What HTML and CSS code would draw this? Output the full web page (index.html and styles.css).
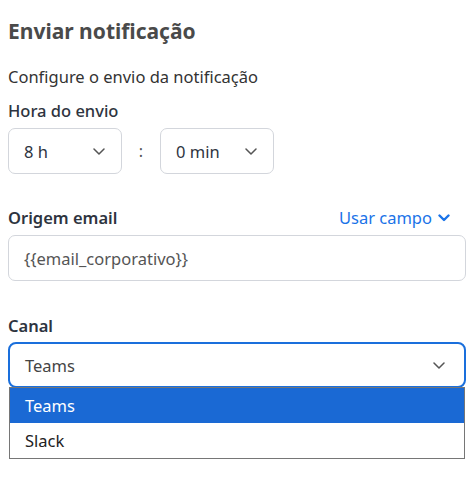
FILE: index.html
```html
<!DOCTYPE html>
<html lang="pt">
<head>
<meta charset="utf-8">
<link rel="stylesheet" href="styles.css">
</head>
<body>
<div class="panel">
  <h1 class="title">Enviar notificação</h1>
  <p class="subtitle">Configure o envio da notificação</p>
  <div class="label">Hora do envio</div>
  <div class="time-row">
    <div class="select small">
      <span class="value">8 h</span>
      <svg class="chev" width="12" height="7" viewBox="0 0 12 7"><path d="M1 1l5 5 5-5" fill="none" stroke="#555" stroke-width="1.5" stroke-linecap="round" stroke-linejoin="round"/></svg>
    </div>
    <span class="colon">:</span>
    <div class="select small">
      <span class="value">0 min</span>
      <svg class="chev" width="12" height="7" viewBox="0 0 12 7"><path d="M1 1l5 5 5-5" fill="none" stroke="#555" stroke-width="1.5" stroke-linecap="round" stroke-linejoin="round"/></svg>
    </div>
  </div>

  <div class="label-row">
    <span class="label strong">Origem email</span>
    <span class="link">Usar campo
      <svg class="link-chev" width="12" height="8" viewBox="0 0 12 8"><path d="M1.5 1.5l4.5 4.5 4.5-4.5" fill="none" stroke="#1a73e8" stroke-width="2.4" stroke-linecap="round" stroke-linejoin="round"/></svg>
    </span>
  </div>
  <div class="input">{{email_corporativo}}</div>

  <div class="label strong canal">Canal</div>
  <div class="select-wrap">
    <div class="select wide focused">
      <span class="value">Teams</span>
      <svg class="chev" width="12" height="7" viewBox="0 0 12 7"><path d="M1 1l5 5 5-5" fill="none" stroke="#555" stroke-width="1.5" stroke-linecap="round" stroke-linejoin="round"/></svg>
    </div>
    <div class="options">
      <div class="option selected">Teams</div>
      <div class="option">Slack</div>
    </div>
  </div>
</div>
</body>
</html>
```

FILE: styles.css
```css
* { box-sizing: border-box; }
html, body { margin: 0; padding: 0; background: #fff; }
body {
  font-family: "Noto Sans", "Open Sans", sans-serif;
  color: #333;
}
.panel {
  padding: 0 10px 0 8px;
  width: 476px;
}
.title {
  margin: 16px 0 0;
  font-size: 21px;
  line-height: 30px;
  font-weight: 700;
  color: #4a4a4a;
}
.subtitle {
  margin: 20px 0 0;
  font-size: 16.5px;
  line-height: 22px;
  color: #333;
}
.label {
  font-size: 16.5px;
  line-height: 22px;
  font-weight: 500;
  color: #2e3440;
}
.subtitle + .label { margin-top: 12px; }
.time-row {
  display: flex;
  align-items: center;
  margin-top: 6px;
  height: 46px;
}
.select {
  display: flex;
  align-items: center;
  justify-content: space-between;
  height: 46px;
  border: 1px solid #d3d6dc;
  border-radius: 7px;
  background: #fff;
  font-size: 16.5px;
  color: #333;
}
.select.small {
  width: 114px;
  padding: 0 16px 0 15px;
}
.select.small .value { color: #2e3440; }
.colon {
  width: 38px;
  text-align: center;
  font-size: 16px;
  color: #555;
}
.label-row {
  display: flex;
  justify-content: space-between;
  align-items: center;
  margin-top: 33px;
  padding-right: 16px;
}
.strong { font-weight: 600; }
.link {
  display: flex;
  align-items: center;
  gap: 6px;
  font-size: 16.5px;
  line-height: 22px;
  color: #1a73e8;
}
.input {
  margin-top: 6px;
  height: 46px;
  border: 1px solid #d3d6dc;
  border-radius: 7px;
  padding: 0 15px;
  display: flex;
  align-items: center;
  font-size: 16.5px;
  color: #555;
}
.canal { margin-top: 34px; }
.select-wrap {
  margin-top: 5px;
}
.select.wide {
  width: 458px;
  padding: 0 19px 0 15px;
}
.select.focused {
  border: 2px solid #1a6fdc;
  border-radius: 8px;
  height: 46px;
}
.select.focused .value { color: #444; }
.options {
  margin: -1px 0 0 1px;
  width: 456px;
  border: 1px solid #767676;
  background: #fff;
}
.option {
  height: 35px;
  line-height: 35px;
  padding-left: 15px;
  font-size: 16.5px;
  color: #222;
}
.option.selected {
  background: #1a69d4;
  color: #fff;
}
```
